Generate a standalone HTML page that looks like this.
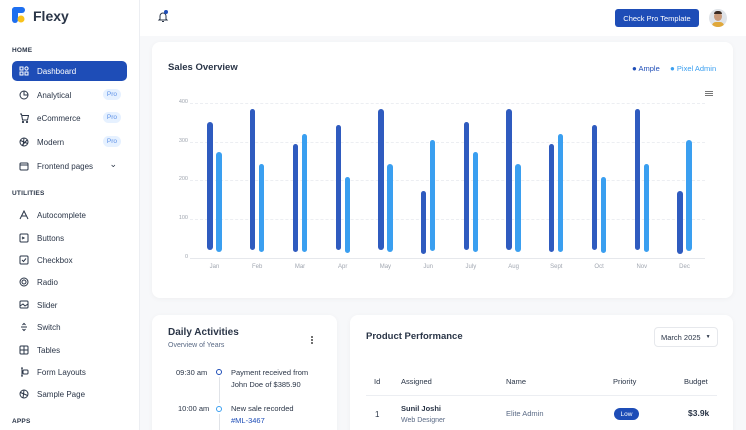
<!DOCTYPE html>
<html style="overflow:hidden;width:746px;height:430px"><head><meta charset="utf-8"><style>
*{margin:0;padding:0;box-sizing:border-box}
body{width:746px;height:430px;overflow:hidden;background:#f7f8fa;font-family:"Liberation Sans",sans-serif;color:#2a3547;position:relative}
.sb{position:absolute;left:0;top:0;width:140px;height:430px;background:#fff;border-right:1px solid #eceef2}
.abs{position:absolute}
.hd{position:absolute;left:12px;font-size:6.5px;font-weight:bold;color:#2a3547;letter-spacing:.2px}
.it{position:absolute;left:12px;width:115px;height:20px;font-size:8px;color:#2a3547;display:flex;align-items:center;padding-left:25px}
.it .ic{position:absolute;left:7px;top:5px;width:10px;height:10px}
.it.act{background:#1e4db7;color:#fff;border-radius:5px}
.pro{position:absolute;right:6px;top:4px;background:#e6f1ff;color:#5b8fe6;font-size:6.5px;border-radius:6px;padding:2px 4px}
.card{position:absolute;background:#fff;border-radius:8px;box-shadow:0 1px 6px rgba(0,0,0,.04)}
.bar{position:absolute;width:5.4px;border-radius:3px}
.d{background:#2f5bbf}.l{background:#3a9ff0}
.grid{position:absolute;left:190px;width:515px;border-top:1px dashed #eceef2}
.yl{position:absolute;left:168px;width:20px;text-align:right;font-size:5.5px;color:#a0a6b0}
.ml{position:absolute;top:264px;font-size:6px;color:#a0a6b0;width:30px;text-align:center}
</style></head><body>
<div class="sb">
 <svg class="abs" style="left:12px;top:7px" width="13" height="17" viewBox="0 0 13 17"><rect x="0" y="0" width="6" height="16" rx="3" fill="#1e6ff0"/><rect x="0" y="0" width="13" height="6" rx="3" fill="#1e6ff0"/><circle cx="9" cy="12" r="3.5" fill="#f9c21b"/></svg>
 <div class="abs" style="left:33px;top:8px;font-size:14px;font-weight:bold;color:#2a3547">Flexy</div>
 <div class="hd" style="top:47px">HOME</div>
 <div class="it act" style="top:61px"><svg class="ic" viewBox="0 0 10 10" fill="none" stroke="#fff" stroke-width="1"><rect x="1" y="1" width="3" height="3"/><circle cx="7.5" cy="2.5" r="1.6"/><rect x="1" y="6" width="3" height="3"/><rect x="6" y="6" width="3" height="3"/></svg>Dashboard</div>
 <div class="it" style="top:85px"><svg class="ic" viewBox="0 0 10 10" fill="none" stroke="#2a3547" stroke-width="1"><circle cx="5" cy="5" r="4"/><path d="M5 1v4h4"/></svg>Analytical<span class="pro">Pro</span></div>
 <div class="it" style="top:108px"><svg class="ic" viewBox="0 0 10 10" fill="none" stroke="#2a3547" stroke-width="1"><path d="M1 1h1.5l1 6h5l1-4.5h-7"/><circle cx="4" cy="9" r=".6"/><circle cx="8" cy="9" r=".6"/></svg>eCommerce<span class="pro">Pro</span></div>
 <div class="it" style="top:132px"><svg class="ic" viewBox="0 0 10 10" fill="none" stroke="#2a3547" stroke-width="1"><circle cx="5" cy="5" r="4"/><path d="M1.5 3.5l7 3M5 1l-1 8M3 8.5l5.5-6"/></svg>Modern<span class="pro">Pro</span></div>
 <div class="it" style="top:156px"><svg class="ic" viewBox="0 0 10 10" fill="none" stroke="#2a3547" stroke-width="1"><rect x="1" y="2" width="8" height="7" rx="1"/><path d="M1 4h8"/></svg>Frontend pages<span class="abs" style="right:10px;top:3px;font-size:9px">&#8964;</span></div>
 <div class="hd" style="top:190px">UTILITIES</div>
 <div class="it" style="top:205px"><svg class="ic" viewBox="0 0 10 10" fill="none" stroke="#2a3547" stroke-width="1"><path d="M1 9l4-8 4 8M3 6h4"/></svg>Autocomplete</div>
 <div class="it" style="top:228px"><svg class="ic" viewBox="0 0 10 10" fill="none" stroke="#2a3547" stroke-width="1"><rect x="1" y="1" width="8" height="8" rx="1"/><path d="M3 4l2 1-2 1"/></svg>Buttons</div>
 <div class="it" style="top:250px"><svg class="ic" viewBox="0 0 10 10" fill="none" stroke="#2a3547" stroke-width="1"><rect x="1" y="1" width="8" height="8" rx="1"/><path d="M3 5l1.5 1.5L7 3.5"/></svg>Checkbox</div>
 <div class="it" style="top:272px"><svg class="ic" viewBox="0 0 10 10" fill="none" stroke="#2a3547" stroke-width="1"><circle cx="5" cy="5" r="4"/><circle cx="5" cy="5" r="2"/></svg>Radio</div>
 <div class="it" style="top:295px"><svg class="ic" viewBox="0 0 10 10" fill="none" stroke="#2a3547" stroke-width="1"><rect x="1" y="1" width="8" height="7" rx="1"/><path d="M1 6l3-2 2 2 3-2"/></svg>Slider</div>
 <div class="it" style="top:317px"><svg class="ic" viewBox="0 0 10 10" fill="none" stroke="#2a3547" stroke-width="1"><path d="M2 5h6M3.5 3L5 1.5 6.5 3M3.5 7L5 8.5 6.5 7"/></svg>Switch</div>
 <div class="it" style="top:340px"><svg class="ic" viewBox="0 0 10 10" fill="none" stroke="#2a3547" stroke-width="1"><rect x="1" y="1" width="8" height="8" rx="1"/><path d="M1 5h8M5 1v8"/></svg>Tables</div>
 <div class="it" style="top:362px"><svg class="ic" viewBox="0 0 10 10" fill="none" stroke="#2a3547" stroke-width="1"><path d="M3 1v8M2 1h2M2 9h2"/><rect x="4" y="3" width="5" height="4" rx="1"/></svg>Form Layouts</div>
 <div class="it" style="top:384px"><svg class="ic" viewBox="0 0 10 10" fill="none" stroke="#2a3547" stroke-width="1"><circle cx="5" cy="5" r="4"/><path d="M1.5 3.5l7 3M5 1l-1 8"/></svg>Sample Page</div>
 <div class="hd" style="top:418px">APPS</div>
</div>
<div class="abs" style="left:140px;top:0;width:606px;height:36px;background:#fff"></div>
<svg class="abs" style="left:157px;top:11px" width="12" height="12" viewBox="0 0 12 12" fill="none" stroke="#2a3547" stroke-width="1"><path d="M3 8V5a3 3 0 016 0v3l1 1H2z M5 10.5h2"/></svg>
<div class="abs" style="left:164px;top:10px;width:4px;height:4px;border-radius:50%;background:#1e4db7"></div>
<div class="abs" style="left:615px;top:9px;width:84px;height:18px;background:#1e4db7;border-radius:3px;color:#fff;font-size:7.5px;display:flex;align-items:center;justify-content:center">Check Pro Template</div>
<div class="abs" style="left:709px;top:9px;width:18px;height:18px;border-radius:50%;background:#dfe3e8;overflow:hidden"><div class="abs" style="left:5px;top:3px;width:8px;height:9px;border-radius:50%;background:#c99a7a"></div><div class="abs" style="left:5px;top:2px;width:8px;height:3px;border-radius:4px 4px 0 0;background:#3a2a22"></div><div class="abs" style="left:3px;top:13px;width:12px;height:6px;background:#e0a83a;border-radius:4px 4px 0 0"></div></div>

<div class="card" style="left:152px;top:42px;width:581px;height:256px"></div>
<div class="abs" style="left:168px;top:62px;font-size:9.5px;font-weight:bold">Sales Overview</div>
<div class="abs" style="left:632px;top:64px;font-size:7.5px;color:#1e4db7"><span style="font-size:8px">&#9679;</span> Ample</div>
<div class="abs" style="left:670px;top:64px;font-size:7.5px;color:#3a9ff0"><span style="font-size:8px">&#9679;</span> Pixel Admin</div>
<div class="abs" style="left:705px;top:91px;width:8px;height:1px;background:#777;box-shadow:0 2px 0 #777,0 4px 0 #777"></div>
<div class="grid" style="top:103px"></div><div class="grid" style="top:142px"></div><div class="grid" style="top:180px"></div><div class="grid" style="top:219px"></div><div class="grid" style="top:258px;border-top:1px solid #e6e8ec"></div>
<div class="yl" style="top:99px">400</div><div class="yl" style="top:138px">300</div><div class="yl" style="top:176px">200</div><div class="yl" style="top:215px">100</div><div class="yl" style="top:254px">0</div>
<div class="bar d" style="left:207.3px;top:122px;height:128px"></div><div class="bar l" style="left:216.3px;top:152px;height:100px"></div>
<div class="bar d" style="left:250px;top:109px;height:141px"></div><div class="bar l" style="left:259px;top:164px;height:88px"></div>
<div class="bar d" style="left:292.8px;top:144px;height:108px"></div><div class="bar l" style="left:301.8px;top:134px;height:118px"></div>
<div class="bar d" style="left:335.5px;top:125px;height:125px"></div><div class="bar l" style="left:344.5px;top:177px;height:76px"></div>
<div class="bar d" style="left:378.2px;top:109px;height:141px"></div><div class="bar l" style="left:387.2px;top:164px;height:88px"></div>
<div class="bar d" style="left:421px;top:191px;height:63px"></div><div class="bar l" style="left:430px;top:140px;height:111px"></div>
<div class="bar d" style="left:463.7px;top:122px;height:128px"></div><div class="bar l" style="left:472.7px;top:152px;height:100px"></div>
<div class="bar d" style="left:506.4px;top:109px;height:141px"></div><div class="bar l" style="left:515.4px;top:164px;height:88px"></div>
<div class="bar d" style="left:549.1px;top:144px;height:108px"></div><div class="bar l" style="left:558.1px;top:134px;height:118px"></div>
<div class="bar d" style="left:591.9px;top:125px;height:125px"></div><div class="bar l" style="left:600.9px;top:177px;height:76px"></div>
<div class="bar d" style="left:634.6px;top:109px;height:141px"></div><div class="bar l" style="left:643.6px;top:164px;height:88px"></div>
<div class="bar d" style="left:677.3px;top:191px;height:63px"></div><div class="bar l" style="left:686.3px;top:140px;height:111px"></div>
<div class="ml" style="left:199.5px">Jan</div><div class="ml" style="left:242.2px">Feb</div><div class="ml" style="left:285px">Mar</div><div class="ml" style="left:327.7px">Apr</div><div class="ml" style="left:370.4px">May</div><div class="ml" style="left:413.2px">Jun</div><div class="ml" style="left:455.9px">July</div><div class="ml" style="left:498.6px">Aug</div><div class="ml" style="left:541.3px">Sept</div><div class="ml" style="left:584.1px">Oct</div><div class="ml" style="left:626.8px">Nov</div><div class="ml" style="left:669.5px">Dec</div>

<div class="card" style="left:152px;top:315px;width:185px;height:125px"></div>
<div class="abs" style="left:168px;top:327px;font-size:10px;font-weight:bold">Daily Activities</div>
<div class="abs" style="left:168px;top:342px;font-size:7px;color:#5a6a85">Overview of Years</div>
<div class="abs" style="left:311px;top:336px;width:2px;height:2px;background:#444;border-radius:50%;box-shadow:0 3px 0 #444,0 6px 0 #444"></div>
<div class="abs" style="left:176px;top:368px;font-size:7.5px">09:30 am</div>
<div class="abs" style="left:216px;top:369px;width:6px;height:6px;border:1.3px solid #1e4db7;border-radius:50%"></div>
<div class="abs" style="left:218.5px;top:377px;width:1px;height:26px;background:#e0e3e8"></div>
<div class="abs" style="left:231px;top:367px;font-size:7.5px;line-height:12px">Payment received from<br>John Doe of $385.90</div>
<div class="abs" style="left:178px;top:404px;font-size:7.5px">10:00 am</div>
<div class="abs" style="left:216px;top:406px;width:6px;height:6px;border:1.3px solid #3a9ff0;border-radius:50%"></div>
<div class="abs" style="left:218.5px;top:414px;width:1px;height:20px;background:#e0e3e8"></div>
<div class="abs" style="left:231px;top:403px;font-size:7.5px;line-height:12px">New sale recorded<br><span style="color:#1e4db7">#ML-3467</span></div>

<div class="card" style="left:350px;top:315px;width:383px;height:125px"></div>
<div class="abs" style="left:366px;top:331px;font-size:9.5px;font-weight:bold">Product Performance</div>
<div class="abs" style="left:654px;top:327px;width:64px;height:20px;border:1px solid #e6e8ec;border-radius:4px;font-size:7.5px;display:flex;align-items:center;padding-left:6px">March 2025 <span style="font-size:5px;margin-left:5px">&#9660;</span></div>
<div class="abs" style="left:374px;top:377px;font-size:7.5px">Id</div>
<div class="abs" style="left:401px;top:377px;font-size:7.5px">Assigned</div>
<div class="abs" style="left:506px;top:377px;font-size:7.5px">Name</div>
<div class="abs" style="left:613px;top:377px;font-size:7.5px">Priority</div>
<div class="abs" style="left:684px;top:377px;font-size:7.5px">Budget</div>
<div class="abs" style="left:366px;top:395px;width:351px;height:1px;background:#eceef2"></div>
<div class="abs" style="left:375px;top:410px;font-size:8px">1</div>
<div class="abs" style="left:401px;top:404px;font-size:7.5px;font-weight:bold">Sunil Joshi</div>
<div class="abs" style="left:401px;top:417px;font-size:7px;color:#5a6a85">Web Designer</div>
<div class="abs" style="left:506px;top:409px;font-size:7.5px;color:#5a6a85">Elite Admin</div>
<div class="abs" style="left:614px;top:408px;width:25px;height:12px;background:#1e4db7;border-radius:6px;color:#fff;font-size:6.5px;display:flex;align-items:center;justify-content:center">Low</div>
<div class="abs" style="left:688px;top:408px;font-size:8.5px;font-weight:bold">$3.9k</div>
</body></html>
